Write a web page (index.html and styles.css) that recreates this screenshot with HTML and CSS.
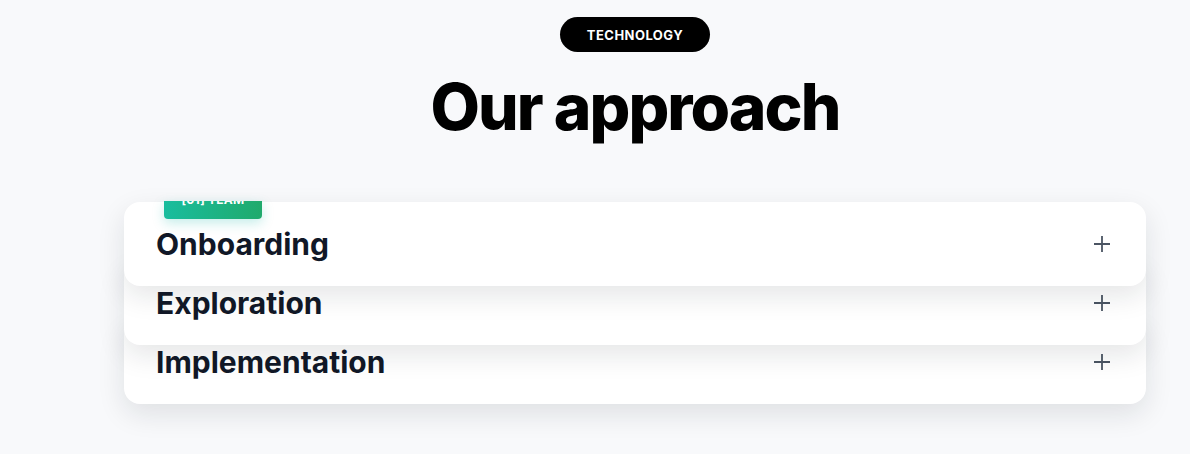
FILE: index.html
```html
<!DOCTYPE html>
<html lang="en">
<head>
<meta charset="utf-8">
<title>Our approach</title>
<link rel="stylesheet" href="styles.css">
</head>
<body>
<main class="section">
  <header class="head">
    <span class="tag">TECHNOLOGY</span>
    <h1 class="title">Our approach</h1>
  </header>
  <div class="stack">
    <div class="card card-1">
      <div class="badge"><span class="badge-text">[01] TEAM</span></div>
      <h2 class="card-title">Onboarding</h2>
      <svg class="plus" width="18" height="18" viewBox="0 0 18 18"><path d="M9 1v16M1 9h16" stroke="currentColor" stroke-width="1.8" fill="none"/></svg>
    </div>
    <div class="card card-2">
      <h2 class="card-title">Exploration</h2>
      <svg class="plus" width="18" height="18" viewBox="0 0 18 18"><path d="M9 1v16M1 9h16" stroke="currentColor" stroke-width="1.8" fill="none"/></svg>
    </div>
    <div class="card card-3">
      <h2 class="card-title">Implementation</h2>
      <svg class="plus" width="18" height="18" viewBox="0 0 18 18"><path d="M9 1v16M1 9h16" stroke="currentColor" stroke-width="1.8" fill="none"/></svg>
    </div>
  </div>
</main>
</body>
</html>
```
FILE: styles.css
```css
* { box-sizing: border-box; }
html, body { margin: 0; padding: 0; }
body {
  background: #f8f9fb;
  font-family: Inter, "Noto Sans", sans-serif;
  height: 454px;
  overflow: hidden;
}
.section {
  width: 1022px;
  margin-left: 124px;
  padding-top: 17px;
}
.head {
  display: flex;
  flex-direction: column;
  align-items: center;
}
.tag {
  display: inline-flex;
  align-items: center;
  justify-content: center;
  width: 150px;
  height: 35px;
  border-radius: 18px;
  background: #000;
  color: #fff;
  font-size: 13px;
  font-weight: 700;
  letter-spacing: 0.035em;
}
.title {
  margin: 20px 0 0;
  font-size: 64px;
  line-height: 70px;
  font-weight: 800;
  letter-spacing: -0.03em;
  color: #000;
}
.stack {
  margin-top: 60px;
  display: flex;
  flex-direction: column;
}
.card {
  position: relative;
  height: 84px;
  border-radius: 16px;
  background: #fff;
  box-shadow: 0 10px 28px rgba(17, 24, 39, 0.11);
  display: flex;
  align-items: center;
  justify-content: space-between;
  padding: 0 35px 0 32px;
}
.card + .card { margin-top: -25px; }
.card-1 { z-index: 3; }
.card-2 { z-index: 2; }
.card-3 { z-index: 1; }
.card-title {
  margin: 0;
  font-size: 30px;
  font-weight: 700;
  letter-spacing: 0;
  color: #111827;
}
.plus { color: #4b5563; }
.badge {
  position: absolute;
  left: 40px;
  top: -1px;
  width: 98px;
  height: 18px;
  overflow: hidden;
  border-radius: 0 0 4px 4px;
  background: linear-gradient(90deg, #19bd9e, #20aa6c);
  box-shadow: 0 4px 12px rgba(20, 184, 166, 0.25);
  display: flex;
  justify-content: center;
}
.badge-text {
  color: #fff;
  font-size: 12px;
  font-weight: 700;
  line-height: 12px;
  margin-top: -7px;
  letter-spacing: 0.02em;
}
```
